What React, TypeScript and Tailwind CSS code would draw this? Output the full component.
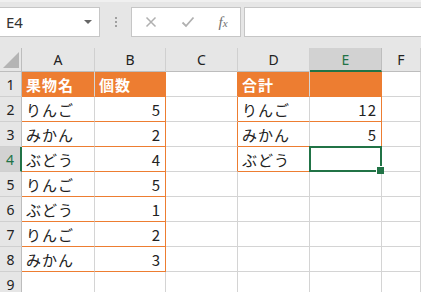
import React from "react";

const cols = ["A", "B", "C", "D", "E", "F"];

type Cell = { text?: string; right?: boolean; head?: boolean };

const data: Cell[][] = [
  [{ text: "果物名", head: true }, { text: "個数", head: true }, {}, { text: "合計", head: true }, { head: true }, {}],
  [{ text: "りんご" }, { text: "5", right: true }, {}, { text: "りんご" }, { text: "12", right: true }, {}],
  [{ text: "みかん" }, { text: "2", right: true }, {}, { text: "みかん" }, { text: "5", right: true }, {}],
  [{ text: "ぶどう" }, { text: "4", right: true }, {}, { text: "ぶどう" }, {}, {}],
  [{ text: "りんご" }, { text: "5", right: true }, {}, {}, {}, {}],
  [{ text: "ぶどう" }, { text: "1", right: true }, {}, {}, {}, {}],
  [{ text: "りんご" }, { text: "2", right: true }, {}, {}, {}, {}],
  [{ text: "みかん" }, { text: "3", right: true }, {}, {}, {}, {}],
  [{}, {}, {}, {}, {}, {}],
];

// which cells carry the orange table borders
const inLeft = (r: number) => r < 8;
const inRight = (r: number) => r < 4;

function cellClass(r: number, c: number) {
  const cls = ["relative h-[25px] flex items-center px-[4px] border-b border-r"];
  const orangeBottom = (c <= 1 && inLeft(r)) || ((c === 3 || c === 4) && inRight(r));
  const orangeRight = (c === 1 && inLeft(r)) || (c === 2 && inRight(r)) || (c === 4 && inRight(r));
  cls.push(orangeBottom ? "border-b-[#ed7d31]" : "border-b-[#d4d4d4]");
  cls.push(orangeRight ? "border-r-[#ed7d31]" : "border-r-[#d4d4d4]");
  return cls.join(" ");
}

export default function App() {
  return (
    <div className="w-[421px] h-[292px] overflow-hidden bg-white font-['Noto_Sans_CJK_JP','Noto_Sans',sans-serif]">
      {/* formula bar */}
      <div className="h-[48px] bg-[#e6e6e6] border-t-2 border-t-[#f0f0f0] flex items-start pt-[5px]">
        <div className="w-[100px] h-[30px] bg-white border border-l-0 border-[#c6c6c6] flex items-center justify-between pl-[6px] pr-[7px]">
          <span className="text-[15px] text-[#333] font-['Noto_Sans',sans-serif]">E4</span>
          <span className="w-0 h-0 border-l-[4px] border-r-[4px] border-t-[4px] border-l-transparent border-r-transparent border-t-[#666]" />
        </div>
        <div className="w-[31px] h-[30px] flex flex-col items-center justify-center gap-[2px]">
          <span className="w-[2px] h-[2px] bg-[#a0a0a0]" />
          <span className="w-[2px] h-[2px] bg-[#a0a0a0]" />
          <span className="w-[2px] h-[2px] bg-[#a0a0a0]" />
        </div>
        <div className="w-[110px] h-[30px] bg-white border border-[#c6c6c6] flex items-center">
          <span className="w-[37px] flex justify-center">
            <svg width="12" height="12" viewBox="0 0 12 12">
              <path d="M1.5 1.5 L10.5 10.5 M10.5 1.5 L1.5 10.5" stroke="#b0b0b0" strokeWidth="1.5" />
            </svg>
          </span>
          <span className="w-[37px] flex justify-center">
            <svg width="14" height="12" viewBox="0 0 14 12">
              <path d="M1.5 6.5 L5 10 L12.5 1.5" stroke="#b0b0b0" strokeWidth="1.8" fill="none" />
            </svg>
          </span>
          <span className="flex-1 flex items-baseline justify-center italic text-[#707070] font-['Liberation_Serif',serif] leading-none">
            <span className="text-[15px]">f</span>
            <span className="text-[11px]">x</span>
          </span>
        </div>
        <div className="ml-[3px] flex-1 h-[30px] bg-white border border-r-0 border-[#c6c6c6]" />
      </div>

      {/* sheet grid */}
      <div className="grid grid-cols-[22px_73px_71px_72px_72px_72px_1fr] text-[15px] text-[#222]">
        {/* column header row */}
        <div className="h-[24px] bg-[#e6e6e6] border-r border-b border-[#bdbdbd] relative">
          <svg className="absolute right-[2px] bottom-[3px]" width="16" height="16" viewBox="0 0 16 16">
            <path d="M16 0 L16 16 L0 16 Z" fill="#b4b4b4" />
          </svg>
        </div>
        {cols.map((c) =>
          c === "E" ? (
            <div
              key={c}
              className="h-[24px] bg-[#d2d2d2] border-r border-r-[#bdbdbd] border-b-2 border-b-[#217346] flex items-center justify-center text-[14px] text-[#217346] font-['Noto_Sans',sans-serif]"
            >
              {c}
            </div>
          ) : (
            <div
              key={c}
              className="h-[24px] bg-[#e6e6e6] border-r border-r-[#d0d0d0] border-b border-b-[#bdbdbd] flex items-center justify-center text-[14px] text-[#222] font-['Noto_Sans',sans-serif]"
            >
              {c}
            </div>
          )
        )}

        {data.map((row, r) => (
          <React.Fragment key={r}>
            {r === 3 ? (
              <div className="h-[25px] bg-[#d2d2d2] border-b border-b-[#d0d0d0] border-r-2 border-r-[#217346] flex items-center justify-center text-[14px] text-[#217346] font-['Noto_Sans',sans-serif]">
                {r + 1}
              </div>
            ) : (
              <div className="h-[25px] bg-[#e6e6e6] border-b border-b-[#d0d0d0] border-r border-r-[#bdbdbd] flex items-center justify-center text-[14px] text-[#222] font-['Noto_Sans',sans-serif]">
                {r + 1}
              </div>
            )}
            {row.map((cell, c) => (
              <div
                key={c}
                className={
                  cellClass(r, c) +
                  (cell.head ? " bg-[#ed7d31] text-white font-bold" : "") +
                  (cell.right ? " justify-end" : "") +
                  (r === 3 && c === 4 ? " z-10" : "")
                }
              >
                {cell.text && <span className="tracking-[1px] leading-none">{cell.text}</span>}
                {r === 3 && c === 4 && (
                  <div className="absolute -left-[1px] -top-[1px] -right-[1px] -bottom-[1px] border-2 border-[#217346]">
                    <div className="absolute -right-[4px] -bottom-[4px] w-[7px] h-[7px] bg-[#217346] shadow-[-1px_-1px_0_0_#ffffff]" />
                  </div>
                )}
              </div>
            ))}
          </React.Fragment>
        ))}
      </div>
    </div>
  );
}
